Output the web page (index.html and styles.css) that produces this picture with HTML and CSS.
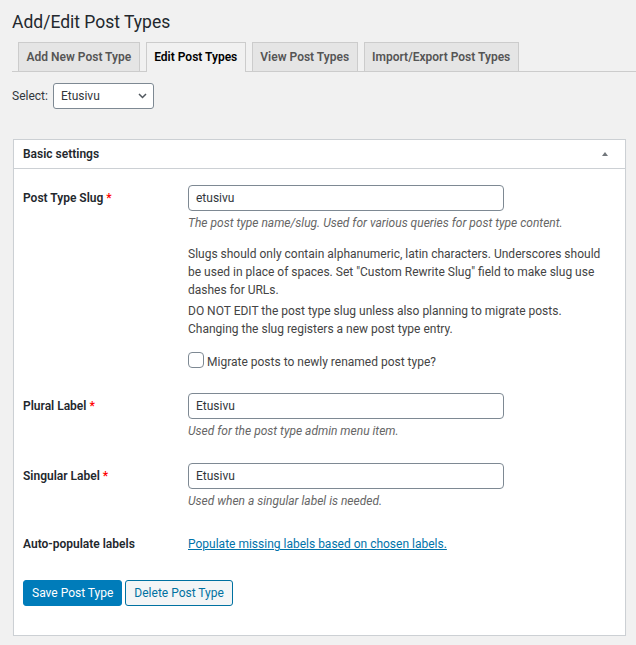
FILE: index.html
```html
<!DOCTYPE html>
<html lang="en">
<head>
<meta charset="utf-8">
<title>Add/Edit Post Types</title>
<link rel="stylesheet" href="styles.css">
</head>
<body>
<div class="wrap">
  <h1 class="page-title">Add/Edit Post Types</h1>
  <nav class="tabs">
    <a class="tab">Add New Post Type</a>
    <a class="tab active">Edit Post Types</a>
    <a class="tab">View Post Types</a>
    <a class="tab">Import/Export Post Types</a>
  </nav>
  <div class="select-row">
    <span class="select-label">Select:</span>
    <div class="select">
      <span>Etusivu</span>
      <svg class="chevron" width="9" height="6" viewBox="0 0 9 6"><polyline points="1,1 4.5,4.5 8,1" fill="none" stroke="#50575e" stroke-width="1.5"/></svg>
    </div>
  </div>
  <div class="postbox">
    <div class="postbox-header">
      <h2 class="postbox-title">Basic settings</h2>
      <span class="toggle"></span>
    </div>
    <div class="inside">
      <div class="row">
        <div class="th">Post Type Slug <span class="req">*</span></div>
        <div class="td">
          <div class="input">etusivu</div>
          <p class="desc">The post type name/slug. Used for various queries for post type content.</p>
          <p class="note first">Slugs should only contain alphanumeric, latin characters. Underscores should be used in place of spaces. Set "Custom Rewrite Slug" field to make slug use dashes for URLs.</p>
          <p class="note">DO NOT EDIT the post type slug unless also planning to migrate posts. Changing the slug registers a new post type entry.</p>
          <label class="check"><span class="box"></span><span class="check-text">Migrate posts to newly renamed post type?</span></label>
        </div>
      </div>
      <div class="row">
        <div class="th">Plural Label <span class="req">*</span></div>
        <div class="td">
          <div class="input">Etusivu</div>
          <p class="desc">Used for the post type admin menu item.</p>
        </div>
      </div>
      <div class="row">
        <div class="th">Singular Label <span class="req">*</span></div>
        <div class="td">
          <div class="input">Etusivu</div>
          <p class="desc">Used when a singular label is needed.</p>
        </div>
      </div>
      <div class="row row-plain">
        <div class="th">Auto-populate labels</div>
        <div class="td"><a class="link">Populate missing labels based on chosen labels.</a></div>
      </div>
      <div class="actions">
        <button class="btn primary">Save Post Type</button>
        <button class="btn secondary">Delete Post Type</button>
      </div>
    </div>
  </div>
</div>
</body>
</html>
```

FILE: styles.css
```css
html, body {
  margin: 0;
  padding: 0;
  background: #f1f1f1;
}

body {
  font-family: Roboto, "Liberation Sans", sans-serif;
  font-size: 12px;
  line-height: 18px;
  color: #444;
}

.wrap {
  padding: 10px 0 0 12px;
}

.page-title {
  margin: 0;
  font-size: 17.5px;
  line-height: 24px;
  font-weight: 400;
  color: #23282d;
}

.tabs {
  display: flex;
  margin-top: 8px;
  border-bottom: 1px solid #ccc;
}

.tab {
  margin-left: 6px;
  padding: 5px 7.5px;
  border: 1px solid #ccc;
  border-bottom: none;
  background: #e5e5e5;
  color: #555;
  font-weight: 600;
  line-height: 18px;
  white-space: nowrap;
}

.tab.active {
  background: #f1f1f1;
  color: #000;
  margin-bottom: -1px;
  padding-bottom: 6px;
}

.select-row {
  display: flex;
  align-items: center;
  gap: 5px;
  margin-top: 11px;
}

.select-label {
  color: #32373c;
}

.select {
  box-sizing: border-box;
  width: 101px;
  height: 26px;
  display: flex;
  align-items: center;
  justify-content: space-between;
  padding: 0 6px 0 7px;
  background: #fff;
  border: 1px solid #7e8993;
  border-radius: 3px;
  color: #32373c;
}

.chevron {
  display: block;
}

.postbox {
  margin: 30px 10px 0 1px;
  background: #fff;
  border: 1px solid #ccd0d4;
  box-shadow: 0 1px 1px rgba(0, 0, 0, 0.04);
}

.postbox-header {
  display: flex;
  align-items: center;
  justify-content: space-between;
  height: 28px;
  padding: 0 17px 0 9px;
  border-bottom: 1px solid #ccd0d4;
}

.postbox-title {
  margin: 0;
  font-size: 12px;
  line-height: 18px;
  font-weight: 600;
  color: #23282d;
}

.toggle {
  width: 0;
  height: 0;
  border-left: 3px solid transparent;
  border-right: 3px solid transparent;
  border-bottom: 4px solid #72777c;
}

.inside {
  padding: 16px 9px 29px 9px;
}

.row {
  display: flex;
  align-items: flex-start;
  margin-bottom: 23px;
}

.th {
  width: 165px;
  flex: none;
  padding-top: 4px;
  font-weight: 600;
  color: #23282d;
}

.req {
  color: #f00;
}

.td {
  flex: 1;
  min-width: 0;
}

.input {
  box-sizing: border-box;
  width: 316px;
  height: 26px;
  padding: 0 7px;
  line-height: 24px;
  border: 1px solid #7e8993;
  border-radius: 4px;
  color: #32373c;
}

.desc {
  margin: 3px 0 0;
  font-style: italic;
  color: #666;
}

.note {
  margin: 3px 0 0;
  padding-right: 8px;
  color: #444;
}

.note.first {
  margin-top: 13px;
}

.check {
  display: flex;
  align-items: flex-start;
  gap: 3px;
  margin: 14px 0 0;
  color: #444;
}

.box {
  box-sizing: border-box;
  width: 16px;
  height: 16px;
  border: 1px solid #7e8993;
  border-radius: 4px;
  background: #fff;
  flex: none;
}

.check-text {
  margin-top: 2px;
  line-height: 16px;
}

.row-plain {
  padding-top: 2px;
}

.row-plain .th {
  padding-top: 0;
}

.link {
  color: #0073aa;
  text-decoration: underline;
}

.actions {
  display: flex;
  gap: 3px;
  margin-top: 27px;
}

.btn {
  box-sizing: border-box;
  height: 26px;
  padding: 0 8px;
  font-family: inherit;
  font-size: 12px;
  line-height: 24px;
  border-radius: 3px;
  border: 1px solid #007cba;
}

.btn.primary {
  background: #007cba;
  color: #fff;
}

.btn.secondary {
  background: #f3f5f6;
  color: #0071a1;
  border-color: #0071a1;
}
```
